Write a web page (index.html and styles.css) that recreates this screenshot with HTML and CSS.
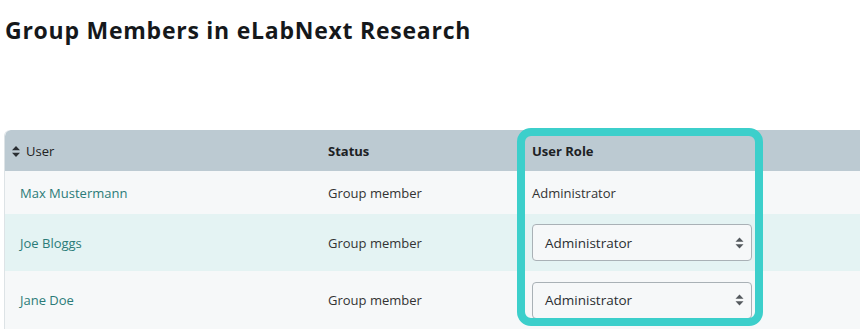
FILE: index.html
```html
<!DOCTYPE html>
<html lang="en">
<head>
<meta charset="utf-8">
<title>Group Members</title>
<link rel="stylesheet" href="styles.css">
</head>
<body>
<h1 class="title">Group Members in eLabNext Research</h1>
<div class="table-wrap">
  <table class="members">
    <thead>
      <tr class="head-row">
        <th class="col-user"><span class="sort"><svg width="8" height="11" viewBox="0 0 8 11"><path d="M4 0 L8 4.3 L0 4.3 Z M0 6.7 L8 6.7 L4 11 Z" fill="#2b2f33"/></svg></span>User</th>
        <th class="col-status strong">Status</th>
        <th class="col-role strong">User Role</th>
        <th class="col-rest"></th>
      </tr>
    </thead>
    <tbody>
      <tr class="row row-a r1">
        <td><a class="user-link" href="#">Max Mustermann</a></td>
        <td>Group member</td>
        <td>Administrator</td>
        <td></td>
      </tr>
      <tr class="row row-b r2">
        <td><a class="user-link" href="#">Joe Bloggs</a></td>
        <td>Group member</td>
        <td>
          <div class="select">
            <span>Administrator</span>
            <svg width="9" height="12" viewBox="0 0 9 12"><path d="M4.5 0.5 L8.5 4.8 L0.5 4.8 Z M0.5 7.2 L8.5 7.2 L4.5 11.5 Z" fill="#54595e"/></svg>
          </div>
        </td>
        <td></td>
      </tr>
      <tr class="row row-a r3">
        <td><a class="user-link" href="#">Jane Doe</a></td>
        <td>Group member</td>
        <td>
          <div class="select">
            <span>Administrator</span>
            <svg width="9" height="12" viewBox="0 0 9 12"><path d="M4.5 0.5 L8.5 4.8 L0.5 4.8 Z M0.5 7.2 L8.5 7.2 L4.5 11.5 Z" fill="#54595e"/></svg>
          </div>
        </td>
        <td></td>
      </tr>
    </tbody>
  </table>
  <div class="highlight"></div>
</div>
</body>
</html>
```
FILE: styles.css
```css
html, body {
  margin: 0;
  padding: 0;
  background: #ffffff;
  overflow: hidden;
}
body {
  font-family: "Open Sans", "Noto Sans", sans-serif;
  color: #333;
  padding-left: 4px;
}
.title {
  margin: 15px 0 0 1px;
  font-size: 23px;
  line-height: 30px;
  font-weight: 700;
  color: #15181b;
  letter-spacing: 0.75px;
}
.table-wrap {
  position: relative;
  margin-top: 85px;
  width: 870px;
}
.members {
  border-collapse: separate;
  border-spacing: 0;
  width: 870px;
  table-layout: fixed;
  font-size: 13px;
  border-left: 1px solid #dde3e6;
  border-top-left-radius: 6px;
  overflow: hidden;
}
.members th, .members td {
  padding: 0 0 0 15px;
  text-align: left;
  vertical-align: middle;
  white-space: nowrap;
}
.col-user { width: 301px; }
.col-status { width: 189px; }
.col-role { width: 237px; }
.head-row th {
  background: #bccad2;
  height: 41px;
  font-weight: 400;
  color: #222;
}
.members .head-row th:first-child { border-top-left-radius: 6px; padding-left: 7px; }
.head-row th.strong { font-weight: 700; color: #1d2124; }
.sort {
  display: inline-block;
  margin-right: 6px;
  vertical-align: -1px;
}
.sort svg { display: block; }
.row-a td { background: #f6f8f9; }
.row-b td { background: #e4f3f3; }
.r1 td { height: 43px; }
.r2 td { height: 57px; }
.r3 td { height: 58px; }
.user-link {
  color: #2b7b78;
  text-decoration: none;
}
.select {
  box-sizing: border-box;
  width: 220px;
  height: 37px;
  border: 1px solid #a9b1b6;
  border-radius: 4px;
  background: #f6f8f9;
  display: flex;
  align-items: center;
  justify-content: space-between;
  padding: 0 7px 0 12px;
  font-size: 13.5px;
  color: #2a2e31;
}
.select svg { display: block; }
.highlight {
  position: absolute;
  left: 513px;
  top: -2px;
  width: 246px;
  height: 198px;
  box-sizing: border-box;
  border: 8px solid #3ccfcb;
  border-radius: 14px;
  pointer-events: none;
}
```
